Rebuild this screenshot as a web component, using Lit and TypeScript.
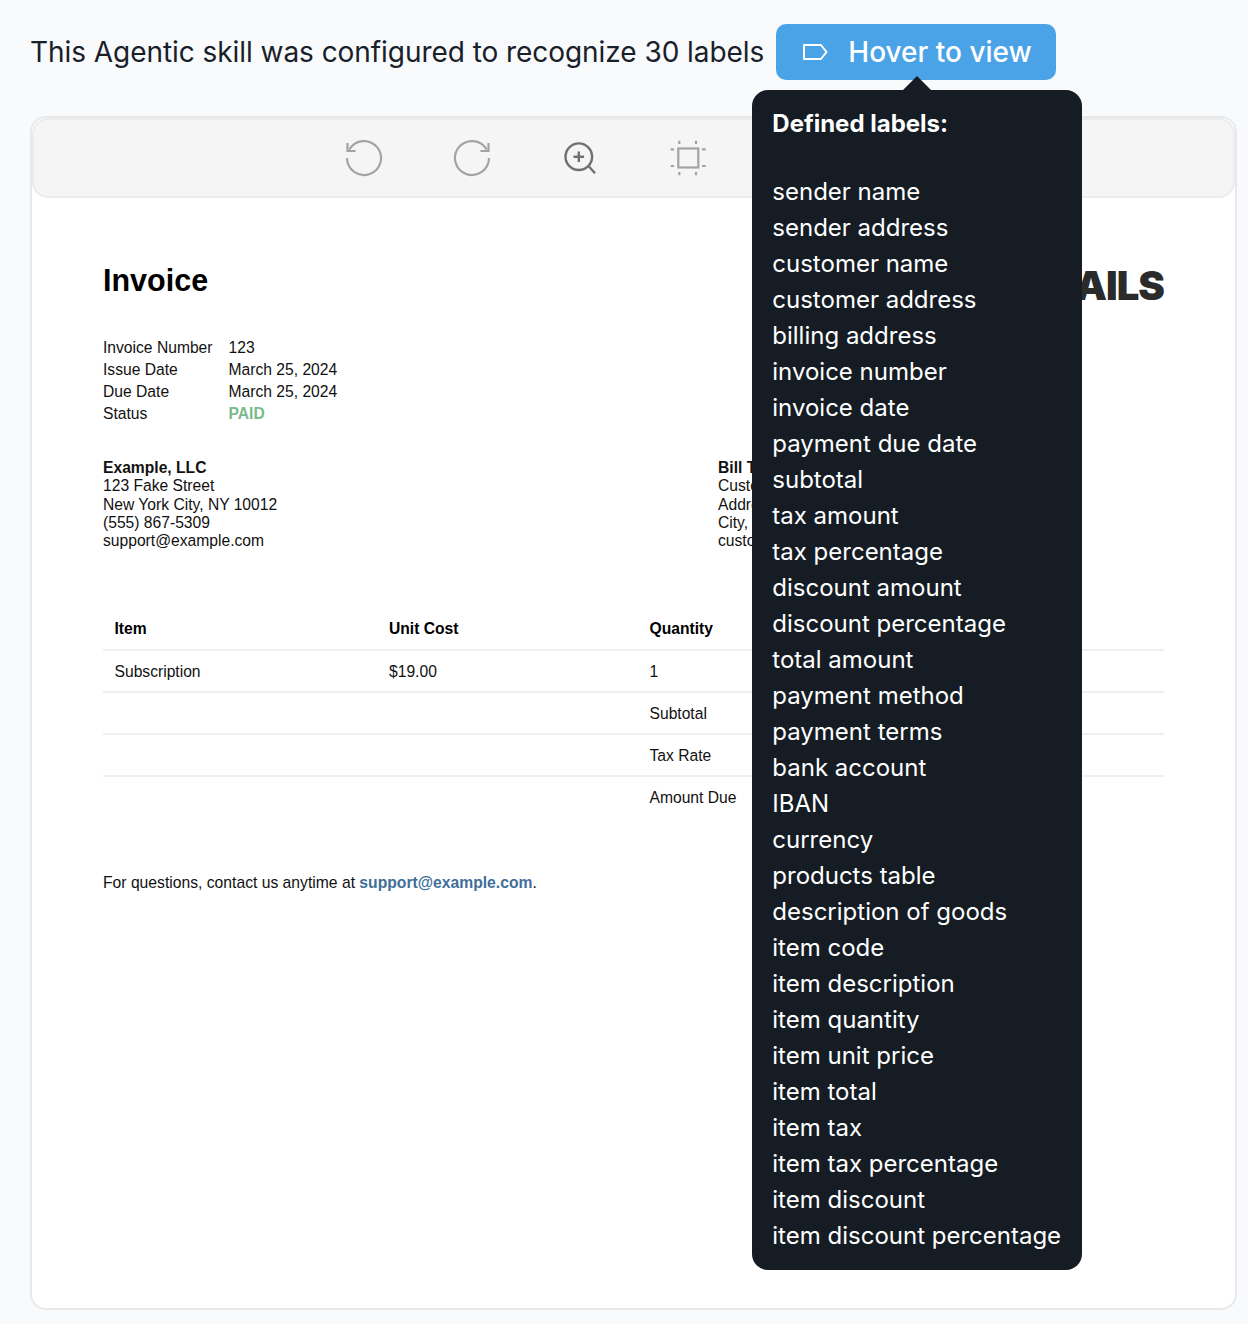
import { css, html, LitElement } from "lit";
import { customElement } from "lit/decorators.js";

const LABELS = [
  "sender name", "sender address", "customer name", "customer address", "billing address",
  "invoice number", "invoice date", "payment due date", "subtotal", "tax amount",
  "tax percentage", "discount amount", "discount percentage", "total amount", "payment method",
  "payment terms", "bank account", "IBAN", "currency", "products table",
  "description of goods", "item code", "item description", "item quantity", "item unit price",
  "item total", "item tax", "item tax percentage", "item discount", "item discount percentage",
];

const META = [
  ["Invoice Number", "123"],
  ["Issue Date", "March 25, 2024"],
  ["Due Date", "March 25, 2024"],
];

const ROWS = [
  ["Subscription", "$19.00", "1"],
  ["", "", "Subtotal"],
  ["", "", "Tax Rate"],
  ["", "", "Amount Due"],
];

@customElement("app-root")
export class AppRoot extends LitElement {
  render() {
    return html`<div class="page">
      <div class="intro">
        <span class="intro-text">This Agentic skill was configured to recognize 30 labels</span>
        <div class="hover-wrap">
          <button class="hover-btn">
            <svg width="26" height="18" viewBox="0 0 26 18" fill="none" stroke="#fff" stroke-width="2" stroke-linejoin="round">
              <path d="M2 2h17l5.500 7-5.500 7H2z"></path>
            </svg>
            Hover to view
          </button>
          <div class="tooltip">
            <div class="tooltip-title">Defined labels:</div>
            ${LABELS.map((l) => html`<div>${l}</div>`)}
          </div>
        </div>
      </div>

      <div class="viewer">
        <div class="toolbar">
          <svg width="40" height="40" viewBox="0 0 40 40" fill="none" stroke="#a3a3a3" stroke-width="2.200">
            <path d="M3 20A17 17 0 1 0 5.300 11.500"></path>
            <path d="M3.500 5v8h8"></path>
          </svg>
          <svg width="40" height="40" viewBox="0 0 40 40" fill="none" stroke="#a3a3a3" stroke-width="2.200">
            <path d="M37 20A17 17 0 1 1 34.700 11.500"></path>
            <path d="M36.500 5v8h-8"></path>
          </svg>
          <svg width="40" height="40" viewBox="0 0 40 40" fill="none" stroke="#707070" stroke-width="2.400">
            <circle cx="18.800" cy="18.700" r="13.300"></circle>
            <path d="M28.300 27.700 35 35.300M18.800 13.400v10.600M13.500 18.700h10.600"></path>
          </svg>
          <svg width="40" height="40" viewBox="0 0 40 40" fill="none" stroke="#a3a3a3" stroke-width="2.200">
            <rect x="10.300" y="10.500" width="20" height="19"></rect>
            <path d="M11.300 2.700V6M28 2.700V6M11.300 34v3.300M28 34v3.300M2.700 11.300H6M2.700 28H6M34 11.300h3.700M34 28h3.700"></path>
          </svg>
          <svg width="40" height="40" viewBox="0 0 40 40" fill="none" stroke="#a3a3a3" stroke-width="2">
            <path d="M20 5v22M12 19l8 8 8-8M5 34h30"></path>
          </svg>
          <svg width="40" height="40" viewBox="0 0 40 40" fill="none" stroke="#a3a3a3" stroke-width="2">
            <rect x="5" y="14" width="30" height="15"></rect>
            <path d="M12 14V5h16v9M12 25h16v10H12z"></path>
          </svg>
        </div>

        <div class="paper">
          <div class="top">
            <h1>Invoice</h1>
            <div class="logo">EMAILS</div>
          </div>

          <div class="meta">
            ${META.map(([k, v]) => html`<span>${k}</span><span>${v}</span>`)}
            <span>Status</span><span class="paid">PAID</span>
          </div>

          <div class="parties">
            <div class="party">
              <b>Example, LLC</b>
              <div>123 Fake Street</div>
              <div>New York City, NY 10012</div>
              <div>(555) 867-5309</div>
              <div>support@example.com</div>
            </div>
            <div class="party">
              <b>Bill To</b>
              <div>Customer</div>
              <div>Address</div>
              <div>City, State</div>
              <div>customer@example.com</div>
            </div>
          </div>

          <div class="items">
            <div class="row head">
              <span>Item</span><span>Unit Cost</span><span>Quantity</span>
            </div>
            ${ROWS.map(
              (r) => html`<div class="row body">${r.map((c) => html`<span>${c}</span>`)}</div>`
            )}
          </div>

          <p class="note">
            For questions, contact us anytime at
            <a>support@example.com</a>.
          </p>
        </div>
      </div>
    </div>`;
  }

  static styles = css`
    :host {
      display: block;
    }
    * {
      box-sizing: border-box;
    }
    .page {
      background: #f9fafc;
      height: 1324px;
      padding: 24px 11px 14px 30px;
      font-family: Inter, "Liberation Sans", sans-serif;
    }
    .intro {
      display: flex;
      align-items: center;
      gap: 12px;
      height: 56px;
    }
    .intro-text {
      font-size: 28px;
      letter-spacing: -0.055px;
      color: #18202a;
    }
    .hover-wrap {
      position: relative;
    }
    .hover-btn {
      display: flex;
      align-items: center;
      gap: 20px;
      width: 280px;
      height: 56px;
      padding: 0 0 0 26px;
      border: 0;
      border-radius: 10px;
      background: #4ba3e7;
      color: #fff;
      font: 500 28px Inter, sans-serif;
    }
    .tooltip {
      position: absolute;
      z-index: 2;
      top: 66px;
      left: -24px;
      width: 330px;
      padding: 16px 20px;
      border-radius: 16px;
      background: #151c24;
      color: #fff;
      font-size: 24px;
      line-height: 36px;
      white-space: nowrap;
    }
    .tooltip::before {
      content: "";
      position: absolute;
      top: -14px;
      left: 151px;
      border-left: 14px solid transparent;
      border-right: 14px solid transparent;
      border-bottom: 14px solid #151c24;
    }
    .tooltip-title {
      font-weight: 700;
      margin-bottom: 32px;
    }
    .viewer {
      margin-top: 36px;
      height: 1194px;
      border: 2px solid #e8e9eb;
      border-radius: 16px;
      background: #fff;
    }
    .toolbar {
      display: flex;
      justify-content: center;
      align-items: center;
      gap: 68px;
      height: 80px;
      border: 2px solid #ececec;
      border-radius: 16px;
      background: #f5f5f5;
    }
    .toolbar svg {
      display: block;
    }
    .paper {
      padding: 64px 71px 0;
      font-family: "Liberation Sans", Arial, sans-serif;
      font-size: 15.650px;
      color: #111;
    }
    .top {
      display: flex;
      justify-content: space-between;
      align-items: flex-start;
      height: 36px;
    }
    h1 {
      margin: 0;
      font-size: 30.500px;
      line-height: 36px;
      color: #000;
    }
    .logo {
      font: 900 40px/48px Inter, sans-serif;
      color: #2b2b2b;
      letter-spacing: -1px;
    }
    .meta {
      display: grid;
      grid-template-columns: 125.500px 1fr;
      grid-auto-rows: 22px;
      align-items: center;
      margin-top: 39px;
    }
    .paid {
      font-weight: 700;
      color: #79bb8b;
    }
    .parties {
      display: grid;
      grid-template-columns: 615px 1fr;
      margin-top: 34px;
      line-height: 18.250px;
    }
    .items {
      margin-top: 59px;
    }
    .row {
      display: grid;
      grid-template-columns: 274.500px 260.500px 1fr;
      align-items: center;
      height: 42px;
      padding-left: 11.500px;
      border-bottom: 2px solid #efefef;
    }
    .row.body {
      padding-top: 1px;
    }
    .row:last-child {
      border-bottom: 0;
      padding-top: 0;
    }
    .head {
      font-weight: 700;
      color: #000;
    }
    .note {
      margin: 54px 0 0;
      font-size: 15.700px;
      line-height: 20px;
    }
    .note a {
      color: #3f6f98;
      font-weight: 700;
    }
  `;
}
